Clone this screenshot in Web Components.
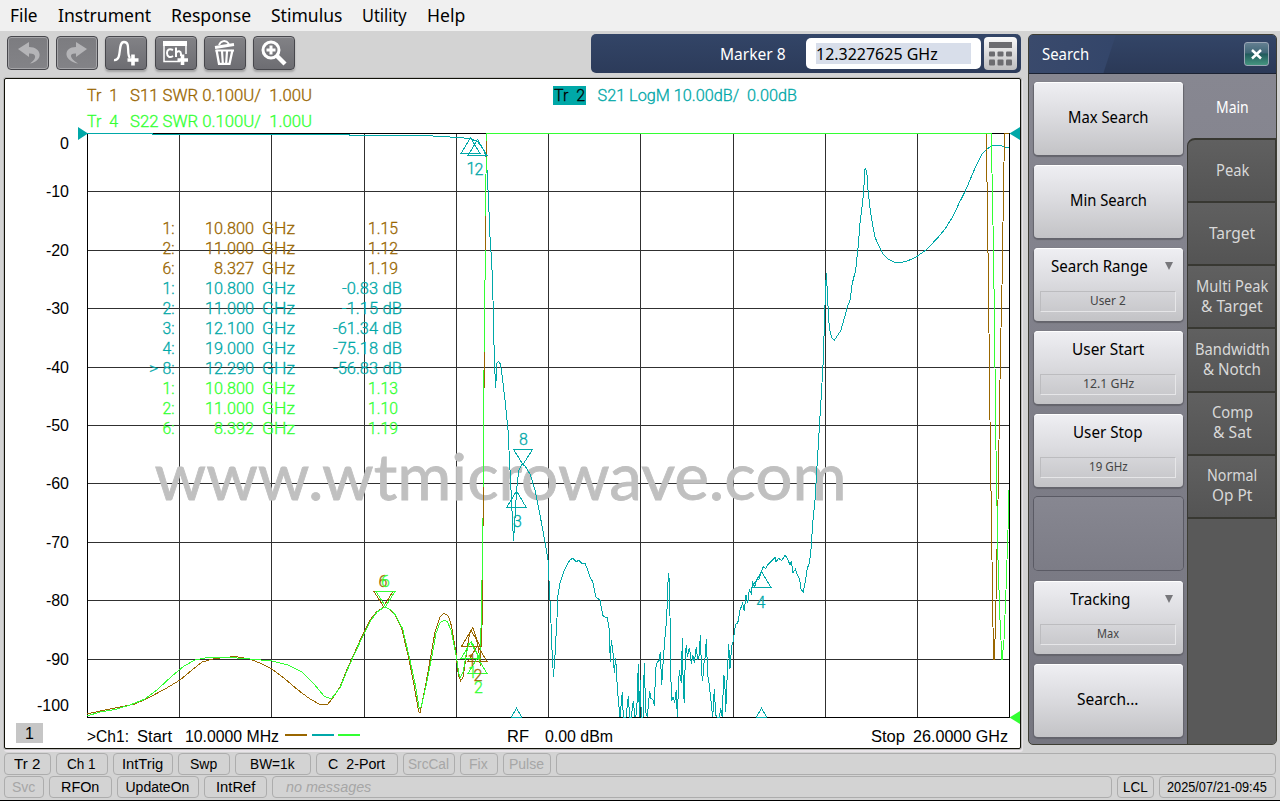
<!DOCTYPE html>
<html lang="en">
<head>
<meta charset="utf-8">
<title>Network Analyzer</title>
<style>
    html, body {
        margin: 0;
        width: 1280px;
        height: 801px;
        overflow: hidden;
        background: #d3d3d3;
    }
</style>
</head>
<body>
<analyzer-app></analyzer-app>

<script>
class ShadowElement extends HTMLElement{
    constructor(){
        super();
        const template = document.createElement('template');
        template.innerHTML = this.constructor.markup;
        this.attachShadow({mode:"open"});
        this.shadowRoot.appendChild(template.content.cloneNode(true));
    }
}

// text squeezed or stretched to the width given in the "w" attribute
class FitText extends ShadowElement{
    static markup = `<style>
                        :host { display: inline-block; white-space: pre; }
                        span { display: inline-block; transform-origin: 0 50%; }
                     </style><span><slot></slot></span>`

    connectedCallback(){
        const width = Number(this.getAttribute("w"));
        const span = this.shadowRoot.querySelector("span");
        span.style.transform = `scaleX(${width / span.offsetWidth})`;
        this.style.width = width + "px";
    }
}

class MenuBar extends ShadowElement{
    static markup = `<style>
                        :host {
                            display: flex;
                            gap: 20px;
                            height: 31px;
                            padding-left: 10px;
                            background: #f0f0f0;
                            font: 18.500px/29px "Noto Sans", "DejaVu Sans", sans-serif;
                            color: #000;
                        }
                     </style>
                     <fit-text w="28">File</fit-text>
                     <fit-text w="93">Instrument</fit-text>
                     <fit-text w="80">Response</fit-text>
                     <fit-text w="71">Stimulus</fit-text>
                     <fit-text w="45">Utility</fit-text>
                     <fit-text w="38">Help</fit-text>`
}

class ToolButton extends ShadowElement{
    static markup = `<style>
                        :host {
                            display: block;
                            box-sizing: border-box;
                            width: 42px;
                            height: 34px;
                            border: 1px solid #47474c;
                            border-radius: 4px;
                            background: linear-gradient(#828286, #6d6d72);
                            box-shadow: inset 0 1px 0 #a0a0a4, 0 2px 2px #a4a4a4;
                        }
                        :host([disabled]) {
                            background: linear-gradient(#7c7c80, #838387);
                            box-shadow: inset 0 0 0 1px #a5a5a8;
                        }
                     </style><slot></slot>`
}

const icons = [
    `<path d="M11 13 L22 6 V11 C35 11 37 25 23 27.500 C31 22 29 17 22 17.500 V21 Z" fill="#b4b4b7"/>`,
    `<path d="M31 13 L20 6 V11 C7 11 7 25 22 27.500 C13 22 13 17 20 17.500 V21 Z" fill="#b4b4b7"/>`,
    `<path d="M9 24 C18 25 12 6 19 6 C26 6 21 18 25 22" fill="none" stroke="#fff" stroke-width="2.300"/>
     <path d="M28 18.500 V29.500 M22.500 24 H33.500" stroke="#fff" stroke-width="3.600"/>`,
    `<path d="M9 10 V25.500 H25 M31 10 V18" fill="none" stroke="#fff" stroke-width="1.500"/>
     <rect x="8" y="5" width="24" height="5" fill="#fff"/>
     <path d="M18 14 C14 12 12 14 12 17 C12 21 15 22 18 20 M21 11.500 V21 M21 17 C23 14 26 15 26 18 V20" fill="none" stroke="#fff" stroke-width="2"/>
     <path d="M27.500 18.500 V29 M22.500 24 H33" stroke="#fff" stroke-width="3.600"/>`,
    `<path d="M12.500 14 L15 27.800 H25.500 L28.500 14" fill="none" stroke="#fff" stroke-width="2.300"/>
     <path d="M11.500 14.500 H30 M18 15 L18.800 27 M23 15 L22.200 27" stroke="#fff" stroke-width="2.200"/>
     <path d="M11 11.500 L30 8.500" stroke="#fff" stroke-width="3"/>
     <path d="M15 9 C17 4 22 4 25 8" fill="none" stroke="#fff" stroke-width="2"/>`,
    `<circle cx="18" cy="14" r="8" fill="none" stroke="#fff" stroke-width="3"/>
     <path d="M18 9.500 V18.500 M13.500 14 H22.500" stroke="#fff" stroke-width="3"/>
     <path d="M24 20 L32 28" stroke="#fff" stroke-width="4.500"/>`
];

class ToolBar extends ShadowElement{
    static markup = `<style>
                        :host { display: flex; height: 47px; padding-left: 3px; box-sizing: border-box; }
                        .tools { display: flex; gap: 7.200px; padding-top: 4.500px; flex: 1; }
                        svg { display: block; margin: -1px; }
                        .entry {
                            display: flex;
                            align-items: center;
                            box-sizing: border-box;
                            width: 430px;
                            height: 39px;
                            margin-top: 3px;
                            padding: 0 4px 0 129px;
                            border-radius: 5px;
                            background: linear-gradient(#334567, #2c3b5a);
                            font: 16.500px/20px "Noto Sans", "DejaVu Sans", sans-serif;
                            color: #fff;
                        }
                        .field {
                            flex: 1;
                            height: 31px;
                            box-sizing: border-box;
                            margin-left: 20px;
                            padding: 5px 10px;
                            border-radius: 5px;
                            background: #fff;
                            color: #000;
                        }
                        .selected { background: #d8deea; height: 21px; line-height: 22px; }
                        .keypad {
                            width: 33px;
                            height: 33px;
                            margin-left: 3px;
                            border-radius: 4px;
                            background: linear-gradient(#fafafa, #bdbdbf);
                        }
                        .keypad svg { margin: 0; }
                     </style>
                     <div class="tools">
                        ${icons.map((icon,index)=>`<tool-button ${index<2?"disabled":""}><svg width="42" height="34">${icon}</svg></tool-button>`).join("")}
                     </div>
                     <div class="entry">
                        <fit-text w="66">Marker 8</fit-text>
                        <div class="field"><div class="selected"><fit-text w="122">12.3227625 GHz</fit-text></div></div>
                        <div class="keypad">
                            <svg width="33" height="33" fill="#6c6c70">
                                <rect x="5" y="5" width="23" height="6"/>
                                <rect x="5" y="14.500" width="6" height="5" rx="1"/><rect x="13.500" y="14.500" width="6" height="5" rx="1"/><rect x="22" y="14.500" width="6" height="5" rx="1"/>
                                <rect x="5" y="22.500" width="6" height="6" rx="1"/><rect x="13.500" y="22.500" width="6" height="6" rx="1"/><rect x="22" y="22.500" width="6" height="6" rx="1"/>
                            </svg>
                        </div>
                     </div>`
}

const BROWN = "#996600";
const TEAL = "#00a8a8";
const GREEN = "#33ff33";
const GRID_X = [87.5,179.5,271.5,364.5,456.5,548.5,640.5,733.5,825.5,917.5,1009.5];
const GRID_Y = [133.5,191.5,250.5,308.5,367.5,425.5,483.5,542.5,600.5,659.5,717.5];

// points noted in thirds of a pixel from an origin
const thirds = (x,y,points)=>points.map(([px,py])=>[x + px / 3, y + py / 3]);

const stopBand = thirds(590,540,[[0,112],[8,125],[18,172],[30,180],[38,226],[46,232],[52,232],[58,270],[61,365],[64,300],[70,345],[73,398],[77,355],[81,425],[85,480],[90,532],[97,457],[100,532],[108,532],[115,468],[119,532],[124,532],[130,482],[135,532],[140,520],[145,372],[148,532],[151,420],[154,532],[159,532],[163,370],[167,515],[172,532],[179,452],[182,475],[190,480],[193,498],[197,385],[201,368],[208,360],[211,337],[215,435],[218,385],[224,300],[229,250],[232,190],[235,99],[238,120],[240,228],[242,400],[245,482],[249,470],[254,488],[259,450],[262,532],[266,425],[268,390],[274,430],[277,294],[280,450],[283,488],[286,350],[289,315],[292,350],[298,325],[301,340],[304,373],[308,345],[313,368],[319,322],[323,360],[328,345],[331,286],[335,400],[338,422],[341,375],[346,350],[349,297],[353,405],[358,435],[362,475],[368,532],[373,448],[377,525],[382,532],[388,532],[392,505],[397,532],[401,405],[404,415],[407,515],[411,420],[416,312],[420,386],[425,318],[429,305],[437,252],[443,250],[450,210],[458,190],[463,213],[468,165],[473,190],[478,150],[484,160],[488,128],[494,140],[500,120],[507,118],[514,95],[520,80],[527,85],[532,76],[545,62],[555,52],[558,65],[566,55],[575,62],[585,45],[592,55],[600,75],[604,62],[609,98],[616,88],[622,103],[629,118],[633,148],[640,155],[646,125],[652,85],[658,70],[662,40],[665,0]]);
const upperBand = thirds(810,120,[[40,720],[43,620],[46,527],[49,460],[52,515],[56,600],[61,640],[66,655],[73,661],[80,650],[92,632],[103,595],[112,562],[120,540],[127,490],[137,450],[145,375],[150,310],[156,260],[161,215],[164,150],[167,145],[171,165],[174,210],[180,265],[187,310],[195,352],[211,387],[220,403],[235,418],[255,427],[270,428],[290,424],[320,410],[350,388],[382,355],[405,327],[430,287],[447,250],[465,215],[480,180],[495,145],[515,103],[530,88],[545,78],[555,76],[575,78],[585,82],[598,82]]);

const s21 = [[87,133.5],[152,133.5],[153,134.5],[349,134.5],[350,135.5],[433,136],[458,137.5],[470,138.5],[478,142],[484,150],[486,157],[487,170],[488,190],[489,212],[490,237],[491,252],[492,270],[493,300],[494,345],[495.5,388],[496.5,375],[497,363],[498.5,361.5],[500.5,364],[502,375],[505,400],[508,430],[510,470],[511,490],[513.5,541],[515,518],[516.5,492],[517.5,480],[519,470],[522,464.5],[525,466],[530,474],[535,490],[540,515],[545,542],[548,560],[549.5,590],[550.5,610],[552,650],[553.5,677],[555,655],[557,618],[558,595],[560,583],[564,571],[567,565],[570,560],[573,558],[576,562],[579,560],[582,564],[585,563],[588,571],...stopBand,[812.5,525],[815,500],[818,450],[821,400],...upperBand];

const s11 = [[87,714],[100,711],[115,708],[135,704],[150,697],[165,689],[180,680],[192,670],[202,662],[215,658.5],[235,656.5],[250,659],[262,664],[272,669],[285,679],[298,690],[310,699],[320,704.5],[327,705],[333,698],...thirds(340,560,[[0,380],[20,330],[45,275],[73,213],[90,180],[110,155],[132,141],[150,148],[165,165],[185,205],[205,290],[222,375],[236,455],[240,460],[256,380],[272,290],[285,215],[300,170],[312,160],[325,168],[335,200],[348,280],[355,345],[362,362],[370,350],[378,290],[388,225],[398,202],[408,230],[416,270],[421,318],[424,240],[427,160],[427,0]])];
const s22 = [[87,716],[100,712],[115,709.5],[130,705],[145,699],[158,689],[172,676],[184,666],[195,660],[205,658],[230,657.5],[250,659],[272,661],[288,665],[302,672],[314,684],[324,696],[331,699],[336,693],...thirds(340,560,[[1,382],[21,332],[46,277],[75,215],[92,182],[112,155],[134,141],[152,149],[168,167],[188,207],[208,292],[224,365],[238,445],[244,440],[258,378],[274,300],[288,220],[300,188],[312,181],[322,185],[333,210],[350,295],[356,340],[361,352],[370,335],[378,285],[386,252],[394,245],[404,262],[414,290],[419,295],[422,240],[425,130],[427,0]]),[482.5,550],[483.5,487],[483.5,390],[484.5,350],[485.5,215],[486.5,134],[486.5,133.5],[991.5,133.5],[992,173],[993.5,250],[994.5,326],[996,450],[998,560],[1000,620],[1002,660],[1004,640],[1006,590],[1008,530],[1009,490]];
const s11Right = [[986.5,133.5],[987,182],[988.5,288],[990,420],[992,560],[993.5,659],[994.5,659],[996,600],[998,500],[1000.5,350],[1002,285],[1003,222],[1004,162],[1005,133.5],[1009,133.5]];
const s11Edge = [[482.5,586,625],[483.5,487,526],[484.5,352,388],[485.5,216,250],[486.5,141,157]];

const line = (points,colour)=>`<polyline points="${points.map(([x,y])=>`${x.toFixed(1)},${y.toFixed(1)}`).join(" ")}" fill="none" stroke="${colour}"/>`;
const up = (x,y,colour)=>`<path d="M${x} ${y} l-9.500 16 h19 z" fill="none" stroke="${colour}"/>`;
const down = (x,y,colour)=>`<path d="M${x} ${y} l-9.500 -15 h19 z" fill="none" stroke="${colour}"/>`;
const text = (x,y,width,colour,value,anchor = "start")=>`<text x="${x}" y="${y}" fill="${colour}" stroke="${colour}" text-anchor="${anchor}" ${width?`textLength="${width}" lengthAdjust="spacingAndGlyphs"`:""}>${value}</text>`;

const readings = [
    ["1:","10.800","1.15","",BROWN],
    ["2:","11.000","1.12","",BROWN],
    ["6:","8.327","1.19","",BROWN],
    ["1:","10.800","-0.83","dB",TEAL],
    ["2:","11.000","-1.15","dB",TEAL],
    ["3:","12.100","-61.34","dB",TEAL],
    ["4:","19.000","-75.18","dB",TEAL],
    ["8:","12.290","-56.83","dB",TEAL],
    ["1:","10.800","1.13","",GREEN],
    ["2:","11.000","1.10","",GREEN],
    ["6:","8.392","1.19","",GREEN]
];

const readingRow = ([marker,frequency,value,unit,colour],index)=>{
    const y = 234 + index * 20;
    const digits = frequency.length === 6 ? 49 : 40;
    return text(174.5,y,12,colour,marker,"end")
        + text(254,y,digits,colour,frequency,"end")
        + text(262,y,33,colour,"GHz")
        + (unit ? text(378,y,value.length === 6 ? 45 : 36,colour,value,"end") + text(382.5,y,19.5,colour,unit) : text(398,y,30,colour,value,"end"));
};

class TraceChart extends ShadowElement{
    static markup = `<style>
                        :host {
                            display: block;
                            box-sizing: border-box;
                            width: 1017px;
                            height: 671px;
                            border: 1px solid #111108;
                            border-radius: 2px;
                            background: #fff;
                            box-shadow: 0 0 0 1px #b9b9b9, 1px 2px 0 1px #e8e4e8;
                        }
                        svg { display: block; }
                        .plot { shape-rendering: crispEdges; }
                        .readout { font: 300 16px Roboto, sans-serif; stroke-width: 0.300px; }
                        .caption { font: 16px "Liberation Sans", Arial, sans-serif; stroke-width: 0; }
                        .watermark { font: 64px Lato, sans-serif; stroke-width: 0.800px; }
                     </style>
                     <svg width="1015" height="669" viewBox="5 79 1015 669">
                        <g class="plot">
                            ${GRID_X.map((x)=>`<path d="M${x} 133 V717" stroke="#303030"/>`).join("")}
                            ${GRID_Y.map((y)=>`<path d="M87 ${y} H1009" stroke="#303030"/>`).join("")}
                            <rect x="87.500" y="133.500" width="922" height="584" fill="none" stroke="#000"/>
                        </g>
                        <g class="watermark">${text(154.5,499.5,692,"#c0c0c0","www.wtmicrowave.com")}</g>
                        <g class="plot">
                            ${line(s21,TEAL)}
                            ${line(s11,BROWN)}
                            ${line(s11Right,BROWN)}
                            ${line(s22,GREEN)}
                            ${s11Edge.map(([x,top,bottom])=>`<path d="M${x} ${top} V${bottom}" stroke="${BROWN}"/>`).join("")}
                            ${up(470.5,137.5,TEAL)}${up(477.5,139.5,TEAL)}${down(523,464.5,TEAL)}${up(516.5,491,TEAL)}${up(761.5,571.5,TEAL)}
                            ${down(383.5,606.5,BROWN)}${up(471,630.5,BROWN)}${up(477.5,645.5,BROWN)}
                            ${down(385.5,606.5,GREEN)}${up(470.5,642.5,GREEN)}${up(477.5,657.5,GREEN)}
                            <path d="M516.500 708 l-5 9 h10 z M761.500 708 l-5 9 h10 z" fill="#fff" stroke="${TEAL}"/>
                        </g>
                        <path d="M78 127 L88 133.500 L78 140 Z M1020 127 L1009.500 133.500 L1020 140 Z" fill="${TEAL}"/>
                        <path d="M1020 711 L1009.500 717.500 L1020 724 Z" fill="${GREEN}"/>
                        <rect x="553" y="86" width="33" height="19" fill="${TEAL}"/>
                        <g class="readout">
                            ${text(87,101,31,BROWN,"Tr&#160; 1")}${text(130,101,182,BROWN,"S11 SWR 0.100U/&#160; 1.00U")}
                            ${text(87,127,31,GREEN,"Tr&#160; 4")}${text(130,127,182,GREEN,"S22 SWR 0.100U/&#160; 1.00U")}
                            ${text(554,101,31,"#000","Tr&#160; 2")}${text(597.5,101,199.5,TEAL,"S21 LogM 10.00dB/&#160; 0.00dB")}
                            ${readings.map(readingRow).join("")}
                            ${text(149,374,9,TEAL,"&gt;")}
                            ${text(471,174,0,TEAL,"1","middle")}${text(479,175,0,TEAL,"2","middle")}
                            ${text(523.5,445,0,TEAL,"8","middle")}${text(517.5,527,0,TEAL,"3","middle")}${text(761,608,0,TEAL,"4","middle")}
                            ${text(383,587,0,BROWN,"6","middle")}${text(385.5,587,0,GREEN,"6","middle")}
                            ${text(472,666,0,BROWN,"1","middle")}${text(478,681,0,BROWN,"2","middle")}
                            ${text(472.5,678,0,GREEN,"1","middle")}${text(478.5,693,0,GREEN,"2","middle")}
                        </g>
                        <g class="caption">
                            ${[0,-10,-20,-30,-40,-50,-60,-70,-80,-90,-100].map((value,index)=>text(69,[149,197,256,314,373,431,489,548,606,665,711][index],0,"#000",value,"end")).join("")}
                            <rect x="16" y="723" width="27" height="20" fill="#c6c6c6"/>
                            ${text(29.5,739,0,"#000","1","middle")}
                            ${text(87,742,42,"#000","&gt;Ch1:")}${text(137,742,35,"#000","Start")}${text(185,742,94,"#000","10.0000 MHz")}
                            ${text(507,742,22,"#000","RF")}${text(545,742,68,"#000","0.00 dBm")}
                            ${text(871,742,34,"#000","Stop")}${text(913,742,95,"#000","26.0000 GHz")}
                        </g>
                        <path d="M285 735 h22" stroke="${BROWN}" stroke-width="2"/>
                        <path d="M312 735 h22" stroke="${TEAL}" stroke-width="2"/>
                        <path d="M338 735 h22" stroke="${GREEN}" stroke-width="2"/>
                     </svg>`
}

class SoftKey extends ShadowElement{
    static markup = `<style>
                        :host {
                            display: flex;
                            flex-direction: column;
                            align-items: center;
                            justify-content: center;
                            box-sizing: border-box;
                            height: 73px;
                            padding: 0 1px 2px 0;
                            border-radius: 4px;
                            background: linear-gradient(#efeff3, #dcdce0 45%, #c3c3c6);
                            box-shadow: inset 0 1px 0 #fff, 0 1px 1px 1px #64646c;
                            color: #000;
                        }
                        :host([empty]) {
                            background: linear-gradient(#878791, #7c7c86);
                            box-shadow: 0 0 0 1px #5a5a64;
                        }
                        :host([value]) { justify-content: flex-start; padding-top: 8px; }
                        .title { display: flex; align-items: center; }
                        .label { flex: 1; text-align: center; }
                        .arrow { display: none; }
                        :host([menu]) .title { align-self: flex-start; width: 139px; }
                        :host([menu]) .arrow {
                            display: block;
                            border: 4px solid transparent;
                            border-width: 8px 4px 0 4px;
                            border-top-color: #77777b;
                        }
                        .value {
                            display: none;
                            box-sizing: border-box;
                            width: 136px;
                            height: 21px;
                            margin-top: 15px;
                            border: 1px solid #bcbcbf;
                            border-right-color: #e6e6e8;
                            border-bottom-color: #e6e6e8;
                            text-align: center;
                            font-size: 12.500px;
                            line-height: 18px;
                            color: #444;
                        }
                        :host([value]) .value { display: block; }
                     </style>
                     <div class="title"><div class="label"><slot></slot></div><div class="arrow"></div></div>
                     <div class="value"><slot name="value"></slot></div>`
}

class PanelTab extends ShadowElement{
    static markup = `<style>
                        :host {
                            display: flex;
                            flex-direction: column;
                            align-items: center;
                            justify-content: center;
                            box-sizing: border-box;
                            height: 63.200px;
                            padding: 0 0 2px 1px;
                            border: solid #383832;
                            border-width: 0 1px 2px 1px;
                            background: linear-gradient(#606060, #545454);
                            color: #d8d8d8;
                        }
                        :host([active]) {
                            height: 64px;
                            padding: 2px 0 0 2px;
                            border: 0;
                            background: none;
                            color: #fff;
                        }
                        :host([first]) { border-top-width: 2px; border-top-left-radius: 8px; height: 65px; }
                     </style><slot></slot>`
}

class SearchPanel extends ShadowElement{
    static markup = `<style>
                        :host {
                            display: flex;
                            flex-direction: column;
                            box-sizing: border-box;
                            width: 249px;
                            height: 711px;
                            margin-top: 3px;
                            border: 1px solid #3e3e34;
                            border-radius: 5px;
                            background: linear-gradient(#888892, #767680);
                            overflow: hidden;
                            font: 16.500px/20px "Noto Sans", "DejaVu Sans", sans-serif;
                        }
                        header {
                            display: flex;
                            align-items: center;
                            justify-content: space-between;
                            height: 38px;
                            padding: 0 7px 0 13px;
                            border-bottom: 1px solid #1b2233;
                            background: linear-gradient(108deg, #3a4a6c 0, #34466a 82px, transparent 83px), linear-gradient(#334567, #2b3957);
                            color: #fff;
                        }
                        .close {
                            box-sizing: border-box;
                            width: 25px;
                            height: 24px;
                            border: 1px solid #9aa6b5;
                            border-radius: 3px;
                            background: linear-gradient(#647f91, #3f6676 45%, #215a5c 50%, #459580);
                        }
                        .close svg { display: block; }
                        .columns { display: flex; flex: 1; }
                        .keys {
                            display: flex;
                            flex-direction: column;
                            gap: 10.200px;
                            width: 149px;
                            padding: 7.500px 4px 0 5px;
                        }
                        .tabs { display: flex; flex-direction: column; flex: 1; }
                        .rest { flex: 1; background: #595959; border-left: 1px solid #3e3e34; }
                     </style>
                     <header>
                        <fit-text w="47">Search</fit-text>
                        <div class="close"><svg width="23" height="22"><path d="M7 7 L16 15.500 M16 7 L7 15.500" stroke="#fff" stroke-width="2.500"/></svg></div>
                     </header>
                     <div class="columns">
                        <div class="keys">
                            <soft-key><fit-text w="80">Max Search</fit-text></soft-key>
                            <soft-key><fit-text w="77">Min Search</fit-text></soft-key>
                            <soft-key value menu><fit-text w="97">Search Range</fit-text><fit-text slot="value" w="36">User 2</fit-text></soft-key>
                            <soft-key value><fit-text w="72">User Start</fit-text><fit-text slot="value" w="51">12.1 GHz</fit-text></soft-key>
                            <soft-key value><fit-text w="70">User Stop</fit-text><fit-text slot="value" w="39">19 GHz</fit-text></soft-key>
                            <soft-key empty></soft-key>
                            <soft-key value menu><fit-text w="60">Tracking</fit-text><fit-text slot="value" w="22">Max</fit-text></soft-key>
                            <soft-key><fit-text w="62">Search...</fit-text></soft-key>
                        </div>
                        <div class="tabs">
                            <panel-tab active><fit-text w="33">Main</fit-text></panel-tab>
                            <panel-tab first><fit-text w="33">Peak</fit-text></panel-tab>
                            <panel-tab><fit-text w="46">Target</fit-text></panel-tab>
                            <panel-tab><fit-text w="72">Multi Peak</fit-text><fit-text w="62">&amp; Target</fit-text></panel-tab>
                            <panel-tab><fit-text w="75">Bandwidth</fit-text><fit-text w="58">&amp; Notch</fit-text></panel-tab>
                            <panel-tab><fit-text w="41">Comp</fit-text><fit-text w="39">&amp; Sat</fit-text></panel-tab>
                            <panel-tab><fit-text w="50">Normal</fit-text><fit-text w="40">Op Pt</fit-text></panel-tab>
                            <div class="rest"></div>
                        </div>
                     </div>`
}

// [cell width, label, label width, state]
const statusRows = [
    [[47,"Tr 2",26],[52,"Ch 1",29],[60,"IntTrig",41],[52,"Swp",27],[76,"BW=1k",45],[82,"C&#160; 2-Port",57],[52,"SrcCal",41,"off"],[38,"Fix",19,"off"],[48,"Pulse",35,"off"],[720]],
    [[40,"Svc",23,"off"],[63,"RFOn",38],[82,"UpdateOn",64],[63,"IntRef",39],[840,"no messages",85,"note"],[37,"LCL",25],[117,"2025/07/21-09:45",100]]
];

class StatusBar extends ShadowElement{
    static markup = `<style>
                        :host {
                            display: flex;
                            flex-direction: column;
                            gap: 1px;
                            box-sizing: border-box;
                            height: 49px;
                            padding: 1px 0 0 3.500px;
                            border-bottom: 1px solid #000;
                            font: 14px/20px "Liberation Sans", Arial, sans-serif;
                            color: #000;
                        }
                        .row { display: flex; gap: 5px; }
                        .cell {
                            display: flex;
                            justify-content: center;
                            flex-shrink: 0;
                            box-sizing: border-box;
                            height: 22px;
                            border: 1px solid #adadad;
                            border-radius: 4px;
                        }
                        .off { color: #a6a6a6; }
                        .note { color: #a6a6a6; font-style: italic; justify-content: flex-start; padding-left: 13px; }
                     </style>
                     ${statusRows.map((row)=>`<div class="row">${row.map(([width,label,labelWidth,state])=>
                        `<div class="cell ${state || ""}" style="width:${width}px">${label?`<fit-text w="${labelWidth}">${label}</fit-text>`:""}</div>`).join("")}</div>`).join("")}`
}

class AnalyzerApp extends ShadowElement{
    static markup = `<style>
                        :host { display: flex; flex-direction: column; width: 1280px; height: 801px; background: #d3d3d3; }
                        main { display: flex; gap: 7px; height: 721px; padding-left: 4px; }
                        .left { width: 1017px; }
                     </style>
                     <menu-bar></menu-bar>
                     <main>
                        <div class="left">
                            <tool-bar></tool-bar>
                            <trace-chart></trace-chart>
                        </div>
                        <search-panel></search-panel>
                     </main>
                     <status-bar></status-bar>`
}

window.customElements.define("fit-text",FitText)
window.customElements.define("menu-bar",MenuBar)
window.customElements.define("tool-button",ToolButton)
window.customElements.define("tool-bar",ToolBar)
window.customElements.define("trace-chart",TraceChart)
window.customElements.define("soft-key",SoftKey)
window.customElements.define("panel-tab",PanelTab)
window.customElements.define("search-panel",SearchPanel)
window.customElements.define("status-bar",StatusBar)
window.customElements.define("analyzer-app",AnalyzerApp)
</script>
</body>
</html>
